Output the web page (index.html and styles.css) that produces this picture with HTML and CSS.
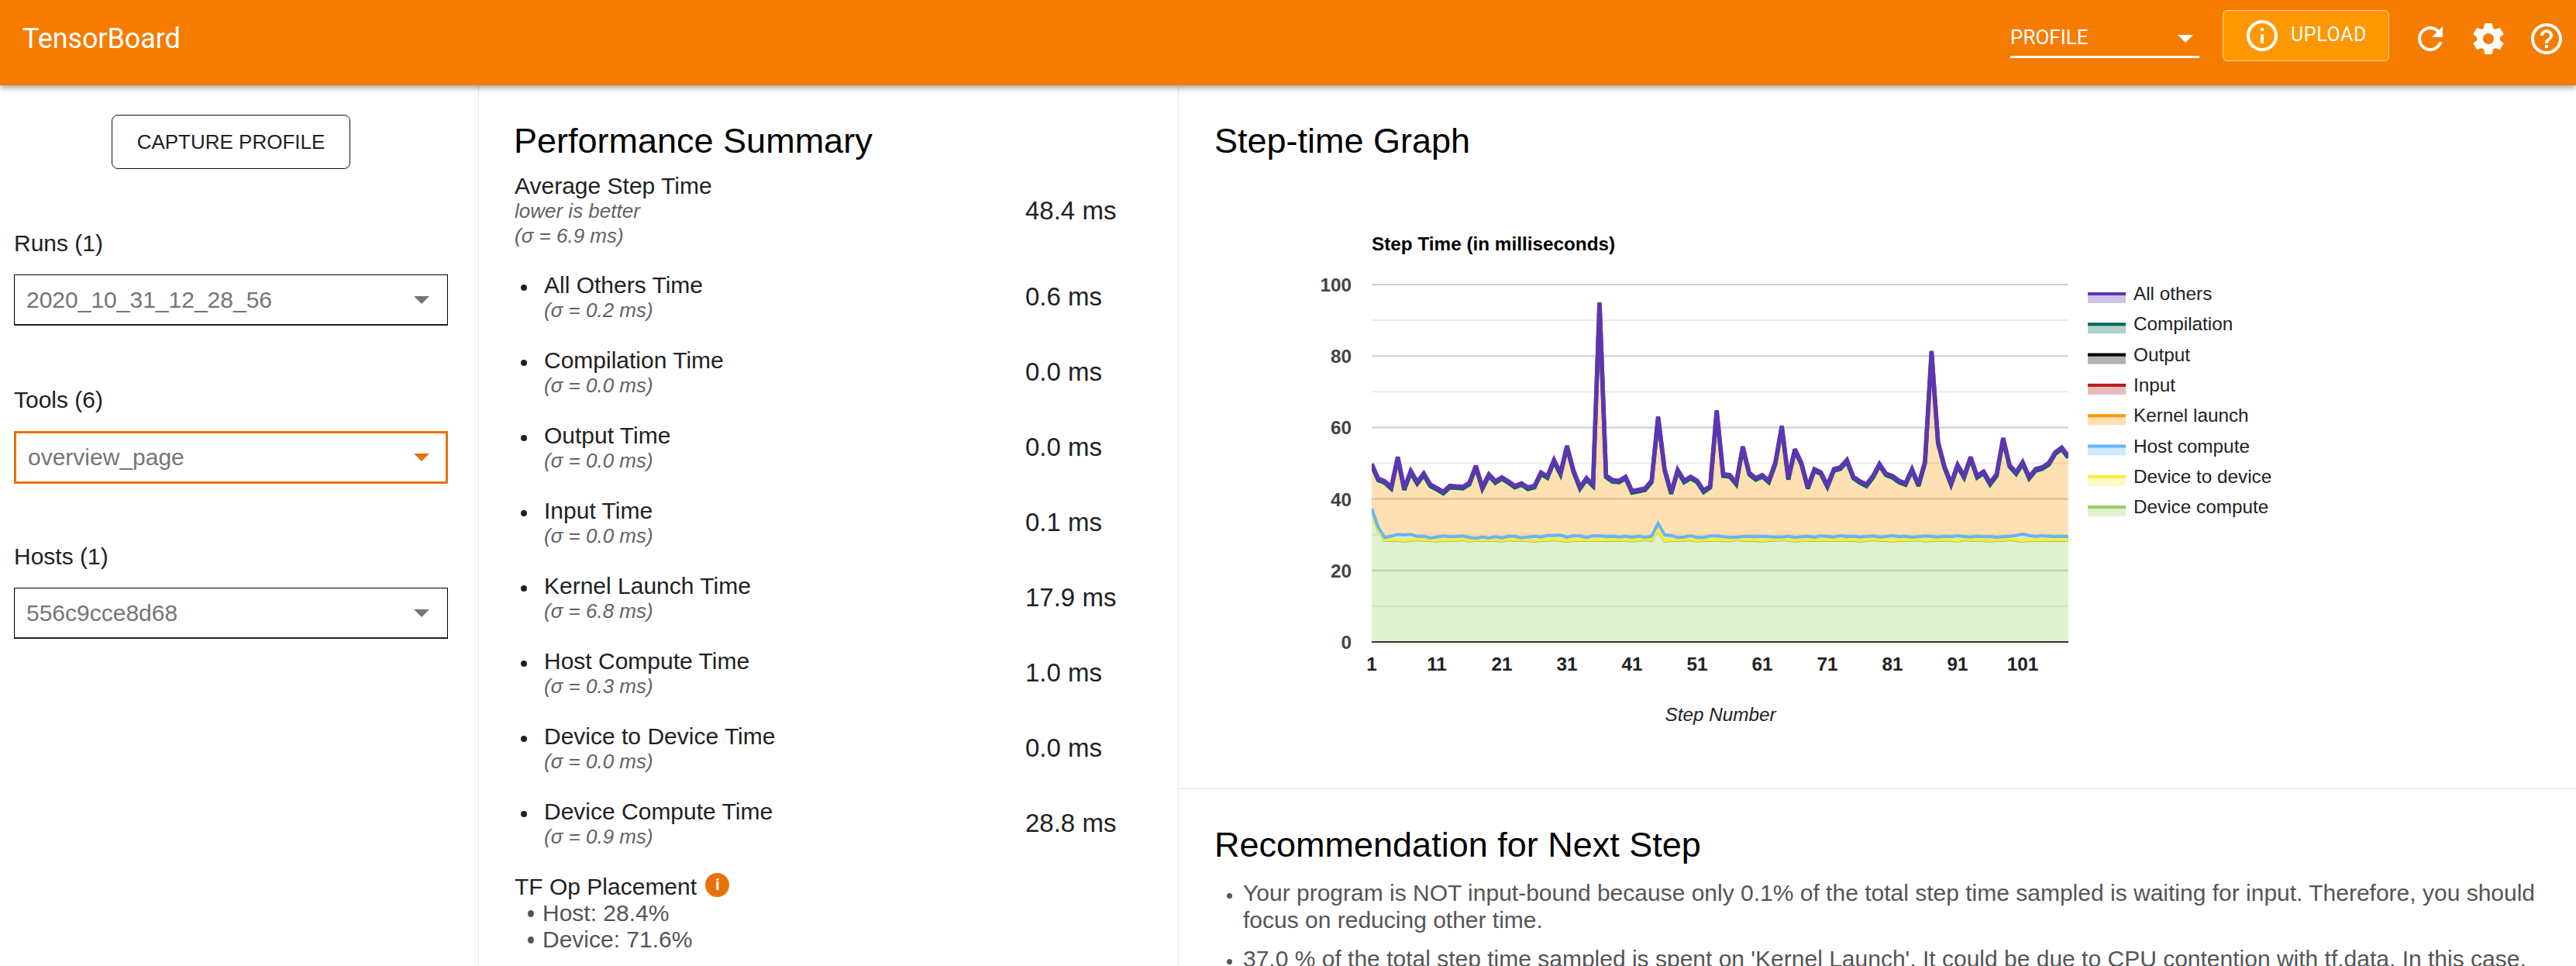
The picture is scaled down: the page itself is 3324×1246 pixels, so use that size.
FILE: index.html
```html
<!DOCTYPE html>
<html lang="en">
<head>
<meta charset="utf-8">
<title>TensorBoard</title>
<link rel="stylesheet" href="styles.css">
</head>
<body>
<header class="topbar">
  <div class="brand">TensorBoard</div>
  <div class="top-actions">
    <div class="plugin-select"><span>PROFILE</span><i class="caret caret-white"></i></div>
    <button class="upload-btn">
      <svg class="icon" viewBox="0 0 24 24"><path d="M11 7h2v2h-2zm0 4h2v6h-2zm1-9C6.48 2 2 6.48 2 12s4.48 10 10 10 10-4.48 10-10S17.52 2 12 2zm0 18c-4.41 0-8-3.59-8-8s3.59-8 8-8 8 3.59 8 8-3.59 8-8 8z"/></svg>
      <span>UPLOAD</span>
    </button>
    <div class="icon-row">
      <svg class="icon" viewBox="0 0 24 24"><path d="M17.65 6.35C16.2 4.9 14.21 4 12 4c-4.42 0-7.99 3.58-7.99 8s3.57 8 7.99 8c3.73 0 6.84-2.55 7.73-6h-2.08c-.82 2.33-3.04 4-5.65 4-3.31 0-6-2.69-6-6s2.69-6 6-6c1.66 0 3.14.69 4.22 1.78L13 11h7V4l-2.35 2.35z"/></svg>
      <svg class="icon" viewBox="0 0 24 24"><path d="M19.43 12.98c.04-.32.07-.64.07-.98s-.03-.66-.07-.98l2.11-1.65c.19-.15.24-.42.12-.64l-2-3.46c-.12-.22-.39-.3-.61-.22l-2.49 1c-.52-.4-1.08-.73-1.69-.98l-.38-2.65C14.46 2.18 14.25 2 14 2h-4c-.25 0-.46.18-.49.42l-.38 2.65c-.61.25-1.17.59-1.69.98l-2.49-1c-.23-.09-.49 0-.61.22l-2 3.46c-.13.22-.07.49.12.64l2.11 1.65c-.04.32-.07.65-.07.98s.03.66.07.98l-2.11 1.65c-.19.15-.24.42-.12.64l2 3.46c.12.22.39.3.61.22l2.49-1c.52.4 1.08.73 1.69.98l.38 2.65c.03.24.24.42.49.42h4c.25 0 .46-.18.49-.42l.38-2.65c.61-.25 1.17-.59 1.69-.98l2.49 1c.23.09.49 0 .61-.22l2-3.46c.12-.22.07-.49-.12-.64l-2.11-1.65zM12 15.5c-1.93 0-3.5-1.57-3.5-3.5s1.57-3.5 3.5-3.5 3.5 1.57 3.5 3.5-1.57 3.5-3.5 3.5z"/></svg>
      <svg class="icon" viewBox="0 0 24 24"><path d="M11 18h2v-2h-2v2zm1-16C6.48 2 2 6.48 2 12s4.48 10 10 10 10-4.48 10-10S17.52 2 12 2zm0 18c-4.41 0-8-3.59-8-8s3.59-8 8-8 8 3.59 8 8-3.59 8-8 8zm0-14c-2.21 0-4 1.79-4 4h2c0-1.1.9-2 2-2s2 .9 2 2c0 2-3 1.75-3 5h2c0-2.25 3-2.5 3-5 0-2.21-1.79-4-4-4z"/></svg>
    </div>
  </div>
</header>

<main class="layout">
  <aside class="sidebar">
    <div class="capture-wrap"><button class="capture-btn">CAPTURE PROFILE</button></div>
    <div class="field">
      <div class="field-label">Runs (1)</div>
      <div class="select"><span>2020_10_31_12_28_56</span><i class="caret"></i></div>
    </div>
    <div class="field">
      <div class="field-label">Tools (6)</div>
      <div class="select select-active"><span>overview_page</span><i class="caret caret-orange"></i></div>
    </div>
    <div class="field">
      <div class="field-label">Hosts (1)</div>
      <div class="select"><span>556c9cce8d68</span><i class="caret"></i></div>
    </div>
  </aside>

  <section class="summary">
    <h2 class="card-title">Performance Summary</h2>
    <div class="metric metric-main">
      <div class="metric-text">
        <div class="metric-name">Average Step Time</div>
        <div class="metric-note">lower is better</div>
        <div class="metric-note">(σ = 6.9 ms)</div>
      </div>
      <div class="metric-value">48.4 ms</div>
    </div>
    <ul class="metric-list">
      <li class="metric"><div class="metric-text"><div class="metric-name">All Others Time</div><div class="metric-note">(σ = 0.2 ms)</div></div><div class="metric-value">0.6 ms</div></li>
      <li class="metric"><div class="metric-text"><div class="metric-name">Compilation Time</div><div class="metric-note">(σ = 0.0 ms)</div></div><div class="metric-value">0.0 ms</div></li>
      <li class="metric"><div class="metric-text"><div class="metric-name">Output Time</div><div class="metric-note">(σ = 0.0 ms)</div></div><div class="metric-value">0.0 ms</div></li>
      <li class="metric"><div class="metric-text"><div class="metric-name">Input Time</div><div class="metric-note">(σ = 0.0 ms)</div></div><div class="metric-value">0.1 ms</div></li>
      <li class="metric"><div class="metric-text"><div class="metric-name">Kernel Launch Time</div><div class="metric-note">(σ = 6.8 ms)</div></div><div class="metric-value">17.9 ms</div></li>
      <li class="metric"><div class="metric-text"><div class="metric-name">Host Compute Time</div><div class="metric-note">(σ = 0.3 ms)</div></div><div class="metric-value">1.0 ms</div></li>
      <li class="metric"><div class="metric-text"><div class="metric-name">Device to Device Time</div><div class="metric-note">(σ = 0.0 ms)</div></div><div class="metric-value">0.0 ms</div></li>
      <li class="metric"><div class="metric-text"><div class="metric-name">Device Compute Time</div><div class="metric-note">(σ = 0.9 ms)</div></div><div class="metric-value">28.8 ms</div></li>
    </ul>
    <div class="placement">
      <div class="placement-title">TF Op Placement <span class="info-dot">i</span></div>
      <ul class="placement-list">
        <li>Host: 28.4%</li>
        <li>Device: 71.6%</li>
      </ul>
    </div>
  </section>

  <section class="detail">
    <div class="graph-card">
      <h2 class="card-title">Step-time Graph</h2>
      <svg id="chart" class="chart" viewBox="1522 240 1802 778" width="1802" height="778">
        <text class="chart-title" x="1770" y="323">Step Time (in milliseconds)</text>
        <g id="grid"></g>
        <g id="series"></g>
        <g id="legend"></g>
        <text class="axis-name" x="2220" y="930" text-anchor="middle">Step Number</text>
      </svg>
    </div>
    <div class="reco-card">
      <h2 class="card-title">Recommendation for Next Step</h2>
      <ul class="reco-list">
        <li>Your program is NOT input-bound because only 0.1% of the total step time sampled is waiting for input. Therefore, you should focus on reducing other time.</li>
        <li>37.0 % of the total step time sampled is spent on 'Kernel Launch'. It could be due to CPU contention with tf.data. In this case, you may try to set the environment variable TF_GPU_THREAD_MODE=gpu_private.</li>
      </ul>
    </div>
  </section>
</main>
<script src="chart.js"></script>
</body>
</html>
```
FILE: styles.css
```css
* { box-sizing: border-box; }
html, body { margin: 0; height: 100%; overflow: hidden; background: #fff; }
body { font-family: "Liberation Sans", Arial, sans-serif; color: #212121; font-size: 30px; }

.topbar {
  position: relative; z-index: 2;
  height: 110px; background: #f57c00; color: #fff;
  display: flex; align-items: flex-start; justify-content: space-between;
  box-shadow: 0 3px 8px rgba(0,0,0,.4);
  font-family: Roboto, sans-serif;
}
.brand { font-size: 36px; line-height: 42px; margin: 29px 0 0 29px; letter-spacing: -.1px; }
.top-actions { display: flex; align-items: flex-start; }
.plugin-select {
  width: 244px; height: 62px; margin-top: 13px; padding-top: 20px;
  border-bottom: 3px solid #fff;
  display: flex; justify-content: space-between;
  font-size: 26px; line-height: 30px;
}
.caret { display: block; width: 0; height: 0; border: 10px solid transparent; border-top-color: #757575; border-bottom-width: 0; }
.caret-white { border-top-color: #fff; margin: 12px 8px 0 0; }
.caret-orange { border-top-color: #e8710a; }
.upload-btn {
  width: 215px; height: 66px; margin: 13px 0 0 30px; padding: 0 0 0 32px;
  background: #ff9800; color: #fff;
  border: 1px solid #ffd699; border-radius: 6px;
  display: flex; align-items: center; gap: 14px;
  font: 400 25px Roboto, sans-serif; letter-spacing: .6px;
}
.upload-btn span { margin-top: -4px; }
.icon { width: 48px; height: 48px; fill: #fff; flex: none; display: block; }
.upload-btn .icon { margin-left: -6px; margin-right: -1px; }
.icon-row { display: flex; gap: 27px; margin: 26px 14px 0 29px; }

.layout { display: flex; height: 1136px; }
.sidebar { width: 618px; flex: none; border-right: 1px solid #e8e8e8; padding: 38px 39px 0 18px; }
.capture-wrap { display: flex; justify-content: center; }
.capture-btn {
  width: 308px; height: 70px; background: #fff; color: #212121;
  border: 1px solid #111; border-radius: 8px;
  font: 400 26px "Liberation Sans", sans-serif;
}
.field { margin-bottom: 78px; }
.capture-wrap + .field { margin-top: 78px; }
.field-label { font-size: 30px; line-height: 35px; margin-bottom: 23px; }
.select {
  height: 66px; border: 1px solid #000; border-bottom: 2px solid #222; padding: 0 23px 0 15px;
  display: flex; align-items: center; justify-content: space-between;
  color: #757575; font-size: 30px;
}
.select-active { height: 68px; border: 3px solid #e8710a; padding: 0 21px 0 15px; margin-bottom: -2px; }

.summary { width: 903px; flex: none; border-right: 1px solid #e8e8e8; padding: 46px 40px 0 45px; }
.card-title { margin: 0; font-weight: 400; font-size: 45px; line-height: 52px; color: #000; }
.summary .card-title { margin-bottom: 11px; }
.metric { display: flex; justify-content: space-between; align-items: center; }
.metric-main { padding-left: 1px; height: 106px; margin-bottom: 24px; }
.metric-main .metric-note { position: relative; top: -1px; }
.metric-name { font-size: 30px; line-height: 34px; }
.metric-note { font-size: 26px; line-height: 32px; font-style: italic; color: #5f6368; }
.metric-value { width: 157px; flex: none; font-size: 33px; }
.metric-list { list-style: none; margin: 0; padding: 0; }
.metric-list .metric { height: 97px; padding-left: 39px; padding-top: 2px; position: relative; align-items: flex-start; }
.metric-list .metric-note { margin-top: -1px; }
.metric-list .metric::before {
  content: ""; position: absolute; left: 9px; top: 18px;
  width: 8px; height: 8px; border-radius: 50%; background: #212121;
}
.metric-list .metric-value { margin-top: 13px; }
.placement { padding-left: 1px; margin-top: 1px; }
.placement-title { font-size: 30px; line-height: 36px; display: flex; align-items: center; gap: 3px; white-space: pre; }
.info-dot {
  width: 31px; height: 31px; border-radius: 50%; background: #e8710a; color: #fff;
  font: 700 20px/31px Roboto, sans-serif; text-align: center; margin-top: -6px;
}
.placement-list { list-style: none; margin: -1px 0 0; padding: 0 0 0 36px; color: #555; }
.placement-list li { position: relative; line-height: 34px; font-size: 30px; }
.placement-list li::before {
  content: ""; position: absolute; left: -19px; top: 13px;
  width: 8px; height: 9px; border-radius: 50%; background: #555;
}

.detail { flex: 1; min-width: 0; }
.graph-card { height: 908px; border-bottom: 2px solid #eee; padding-top: 46px; }
.graph-card .card-title { margin-left: 46px; height: 84px; }
.chart { display: block; margin-left: 1px; }
.chart text { font-family: "Liberation Sans", sans-serif; }
.chart-title { font-size: 24.3px; font-weight: 700; fill: #000; }
.tick-y { font-size: 24.3px; font-weight: 700; fill: #444; text-anchor: end; }
.tick-x { font-size: 24.3px; font-weight: 700; fill: #222; text-anchor: middle; }
.axis-name { font-size: 24.3px; font-style: italic; fill: #222; }
.legend-text { font-size: 24.3px; fill: #222; }
.grid-major { stroke: #ccc; stroke-width: 2; }
.grid-minor { stroke: #ebebeb; stroke-width: 2; }
.grid-zero { stroke: #333; stroke-width: 2; }
.line { fill: none; stroke-width: 4; stroke-linejoin: miter; stroke-miterlimit: 3; }
.line-top { stroke-width: 5.5; }

.reco-card { padding: 46px 30px 0 46px; }
.reco-list { margin: 18px 0 0; padding: 0 0 0 37px; color: #555; font-size: 30px; line-height: 35px; }
.reco-list li { margin-bottom: 15px; }
.reco-list li::marker { font-size: 24px; }
```
FILE: chart.js
```js
(function () {
  var NS = 'http://www.w3.org/2000/svg';
  function el(parent, name, attrs, text) {
    var n = document.createElementNS(NS, name);
    for (var k in attrs) n.setAttribute(k, attrs[k]);
    if (text !== undefined) n.textContent = text;
    parent.appendChild(n);
    return n;
  }
  var L = 1770, R = 2669, Y0 = 828, UNIT = 4.61, STEP = 8.4;
  var grid = document.getElementById('grid');
  var series = document.getElementById('series');
  var legend = document.getElementById('legend');

  // page-space y positions of the stacked totals, traced per step
  var top = [955,1012,1022,1045,928,1050,982,1025,992,1035,1048,1063,1040,1042,1044,1028,962,1045,995,1022,1007,1022,1040,1030,1046,1040,988,1003,940,990,885,980,1045,1010,1035,330,1000,1018,1020,1005,1060,1055,1050,1020,772,975,1065,978,1020,1005,1020,1058,1040,748,995,998,1028,888,990,1010,998,1020,950,808,1010,898,950,1045,975,988,1038,975,968,940,1005,1022,1035,1002,955,992,1002,1020,1030,975,1035,945,518,870,965,1030,958,1002,928,1002,985,1028,995,855,960,988,948,1005,975,968,952,910,892,925]
    .map(function (v) { return 280 + v / 3; });
  var host = [48,120,160,155,148,150,148,155,155,162,158,154,157,156,154,160,163,158,162,157,161,155,155,161,158,155,158,152,152,151,159,153,154,160,154,153,157,155,158,155,159,155,159,155,105,150,152,160,158,153,160,160,154,154,157,159,159,156,156,157,155,157,158,158,155,160,157,155,159,154,156,158,153,157,155,158,156,154,158,156,153,157,155,159,157,154,156,158,155,157,153,156,158,155,157,156,159,157,155,152,146,152,156,153,155,157,155,156]
    .map(function (v) { return 640 + v / 3; });
  var dev = host.map(function (v, i) {
    if (i === 0) return 660;
    if (i === 1) return 683;
    if (i === 44) return 682;
    return 696 + (i % 5 === 0 ? 1 : 0) - (i % 7 === 0 ? 1 : 0);
  });

  [100, 90, 80, 70, 60, 50, 40, 30, 20, 10].forEach(function (v) {
    var y = Y0 - v * UNIT;
    el(grid, 'line', { x1: L, x2: R, y1: y, y2: y, 'class': v % 20 ? 'grid-minor' : 'grid-major' });
  });
  for (var v = 0; v <= 100; v += 20) {
    el(grid, 'text', { x: 1744, y: Y0 - v * UNIT + 9, 'class': 'tick-y' }, String(v));
  }
  for (var s = 1; s <= 101; s += 10) {
    el(grid, 'text', { x: L + (s - 1) * STEP, y: 865, 'class': 'tick-x' }, String(s));
  }

  function pts(arr) {
    return arr.map(function (y, i) { return (L + i * STEP).toFixed(1) + ',' + y.toFixed(1); });
  }
  function area(upper, lower, color) {
    var a = pts(upper), b = lower ? pts(lower).reverse() : [R + ',' + Y0, L + ',' + Y0];
    el(series, 'polygon', { points: a.concat(b).join(' '), fill: color, 'fill-opacity': 0.3 });
  }
  function line(arr, color, extra) {
    el(series, 'polyline', { points: pts(arr).join(' '), stroke: color, 'class': 'line' + (extra ? ' ' + extra : ''), 'clip-path': 'url(#plot)' });
  }
  var defs = el(series, 'clipPath', { id: 'plot' });
  el(defs, 'rect', { x: L, y: 300, width: R - L, height: 540 });

  var teal = top.map(function (y) { return y + 2; });
  area(dev, null, '#9ccc65');
  area(host, dev, '#64b5f6');
  area(teal, host, '#ff9800');
  line(dev.map(function (y) { return y + 1; }), '#9ccc65');
  line(dev, '#ffeb3b');
  line(host, '#64b5f6');
  line(teal, '#00695c', 'line-top');
  line(top, '#5e35b1', 'line-top');
  el(series, 'line', { x1: L, x2: R, y1: Y0, y2: Y0, 'class': 'grid-zero' });

  [['All others', '#5e35b1'], ['Compilation', '#00695c'], ['Output', '#000000'], ['Input', '#b71c1c'],
   ['Kernel launch', '#ff9800'], ['Host compute', '#64b5f6'], ['Device to device', '#ffeb3b'], ['Device compute', '#9ccc65']]
    .forEach(function (row, i) {
      var y = 377 + i * 39.3;
      el(legend, 'rect', { x: 2694, y: y, width: 49, height: 14, fill: row[1], 'fill-opacity': 0.3 });
      el(legend, 'rect', { x: 2694, y: y, width: 49, height: 4, fill: row[1] });
      el(legend, 'text', { x: 2753, y: y + 10, 'class': 'legend-text' }, row[0]);
    });
})();
```
